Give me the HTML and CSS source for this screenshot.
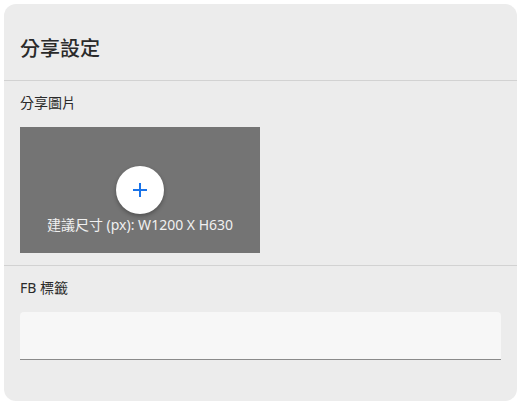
FILE: index.html
```html
<!DOCTYPE html>
<html lang="zh-Hant">
<head>
    <meta charset="UTF-8">
    <meta name="viewport" content="width=device-width, initial-scale=1.0">
    <title>分享設定</title>
    <link rel="stylesheet" href="styles.css">
</head>
<body>
    <div class="card">
        <div class="card-header">
            <h2>分享設定</h2>
        </div>
        <div class="section">
            <div class="label">分享圖片</div>
            <div class="upload">
                <div class="add-btn">
                    <svg width="16" height="16" viewBox="0 0 16 16">
                        <path d="M8 1v14M1 8h14" stroke="#1a73e8" stroke-width="2" fill="none"/>
                    </svg>
                </div>
                <div class="hint">建議尺寸 (px): W1200 X H630</div>
            </div>
        </div>
        <div class="section last">
            <div class="label">FB 標籤</div>
            <input type="text" class="input-text" autocomplete="off">
        </div>
    </div>
</body>
</html>
```
FILE: styles.css
```css
*{
    box-sizing: border-box;
}
body{
    margin: 0;
    background-color: #fff;
    font-family: "Noto Sans", "Noto Sans CJK TC", sans-serif;
    color: #2a2a2a;
}
.card{
    margin: 4px;
    width: 513px;
    height: 397px;
    background-color: #ececec;
    border-radius: 12px;
    overflow: hidden;
}
.card-header{
    height: 77px;
    display: flex;
    align-items: center;
    padding: 0 16px 0 16px;
    border-bottom: 1px solid #d2d2d2;
}
h2{
    margin: 0;
    padding-top: 11px;
    font-size: 20px;
    font-weight: 500;
}
.section{
    padding: 12px 16px 12px;
    border-bottom: 1px solid #d2d2d2;
}
.section.last{
    border-bottom: none;
}
.label{
    font-size: 14px;
    font-weight: 400;
    line-height: 20px;
    margin-bottom: 14px;
}
.upload{
    width: 240px;
    height: 126px;
    background-color: #747474;
    display: flex;
    flex-direction: column;
    align-items: center;
    padding-top: 39px;
}
.add-btn{
    width: 48px;
    height: 48px;
    border-radius: 50%;
    background-color: #fff;
    box-shadow: 0 2px 4px rgba(0,0,0,0.3);
    display: flex;
    align-items: center;
    justify-content: center;
}
.hint{
    margin-top: 1px;
    font-size: 14px;
    line-height: 20px;
    color: #f0f0f0;
}
.input-text{
    display: block;
    width: 481px;
    height: 48px;
    border: none;
    border-bottom: 1px solid #8a8a8a;
    border-radius: 4px 4px 0 0;
    background-color: #f7f7f7;
    outline: none;
}
```
